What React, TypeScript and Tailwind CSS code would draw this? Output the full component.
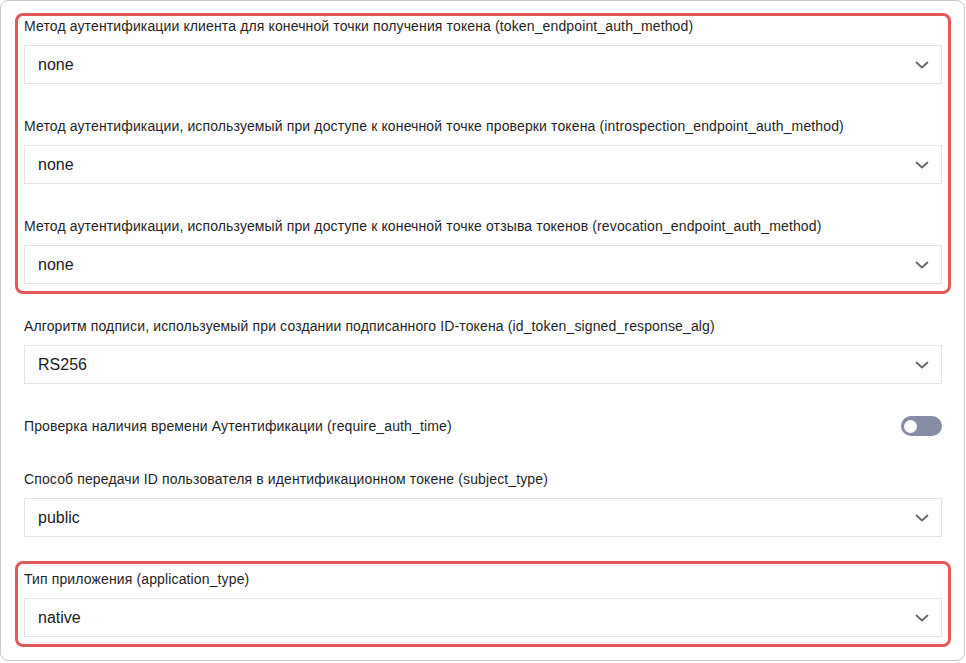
import React from "react";

const font = { fontFamily: '"Liberation Sans", Arial, sans-serif' };

function Chevron() {
  return (
    <svg width="14" height="8" viewBox="0 0 14 8" className="shrink-0">
      <path d="M1.5 1.5 L7 6.5 L12.5 1.5" fill="none" stroke="#666" strokeWidth="1.8" strokeLinecap="round" strokeLinejoin="round" />
    </svg>
  );
}

function Select({ value }: { value: string }) {
  return (
    <div className="flex h-[39px] items-center justify-between border border-[#e4e4e4] bg-white pl-[13px] pr-[12px]">
      <span className="text-[16px] text-[#1b1b1b]">{value}</span>
      <Chevron />
    </div>
  );
}

function Field({ label, value, className = "" }: { label: string; value: string; className?: string }) {
  return (
    <div className={"flex flex-col gap-[9px] " + className}>
      <div className="h-[20px] whitespace-nowrap text-[14px] leading-[20px] tracking-[0.13px] text-[#1f1f1f]">{label}</div>
      <Select value={value} />
    </div>
  );
}

export default function App() {
  return (
    <div className="bg-white" style={font}>
      <div className="h-[661px] w-[965px] rounded-[8px] border border-[#c9c9c9] bg-white pl-[23px] pr-[22px] pt-[12px]">
        <div className="-mx-[9px] flex flex-col gap-[32px] rounded-[8px] border-[3px] border-[#e45858] px-[6px] pb-[7px]">
          <Field
            label="Метод аутентификации клиента для конечной точки получения токена (token_endpoint_auth_method)"
            value="none"
          />
          <Field
            label="Метод аутентификации, используемый при доступе к конечной точке проверки токена (introspection_endpoint_auth_method)"
            value="none"
          />
          <Field
            label="Метод аутентификации, используемый при доступе к конечной точке отзыва токенов (revocation_endpoint_auth_method)"
            value="none"
          />
        </div>
        <Field
          className="mt-[22px]"
          label="Алгоритм подписи, используемый при создании подписанного ID-токена (id_token_signed_response_alg)"
          value="RS256"
        />
        <div className="mt-[32px] flex h-[20px] items-center justify-between">
          <span className="whitespace-nowrap text-[14px] leading-[20px] tracking-[0.13px] text-[#1f1f1f]">
            Проверка наличия времени Аутентификации (require_auth_time)
          </span>
          <div className="flex h-[20px] w-[41px] items-center rounded-full bg-[#878ca6] px-[1px]">
            <div className="h-[17px] w-[17px] rounded-full border-[2px] border-[#878ca6] bg-white" />
          </div>
        </div>
        <Field
          className="mt-[33px]"
          label="Способ передачи ID пользователя в идентификационном токене (subject_type)"
          value="public"
        />
        <div className="-mx-[9px] mt-[24px] rounded-[8px] border-[3px] border-[#e45858] px-[6px] pb-[7px] pt-[5px]">
          <Field label="Тип приложения (application_type)" value="native" />
        </div>
      </div>
    </div>
  );
}
